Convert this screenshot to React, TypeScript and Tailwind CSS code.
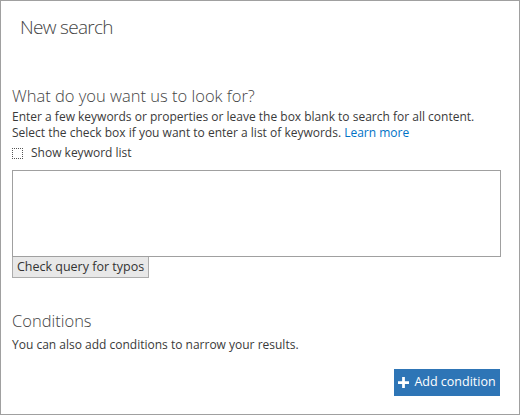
import React from "react";

export default function App() {
  return (
    <div
      className="w-[520px] h-[415px] border border-[#a0a0a0] bg-white text-[#3a3a3a] flex flex-col pl-[11px] pr-[19px]"
      style={{ fontFamily: '"Open Sans", "Noto Sans", sans-serif' }}
    >
      <h1 className="ml-[8px] mt-[13px] text-[19px] leading-[26px] font-light tracking-[-0.7px] text-[#444444]">
        New search
      </h1>

      <h2 className="mt-[45px] text-[16.5px] leading-[22px] font-light text-[#444444]">
        What do you want us to look for?
      </h2>
      <p className="mt-[2px] text-[12px] leading-[16px]">
        Enter a few keywords or properties or leave the box blank to search for all content.
        <br />
        Select the check box if you want to enter a list of keywords.{" "}
        <a className="text-[#0072c6]">Learn more</a>
      </p>

      <label className="mt-[3px] flex items-center gap-[8px] text-[12px] leading-[18px]">
        <span className="w-[11px] h-[11px] border border-dotted border-[#555555] block" />
        <span>Show keyword list</span>
      </label>

      <textarea className="mt-[8px] w-[489px] h-[87px] border border-[#a0a0a0] resize-none outline-none" />

      <div className="flex">
        <button className="h-[21px] w-[137px] border border-[#acacac] border-t-0 bg-[#e8e8e8] text-[12.5px] leading-[18px] text-[#333333]">
          Check query for typos
        </button>
      </div>

      <h2 className="mt-[32px] text-[16.5px] leading-[22px] font-light text-[#444444]">Conditions</h2>
      <p className="mt-[5px] text-[12px] leading-[16px]">You can also add conditions to narrow your results.</p>

      <div className="flex justify-end mt-[16px]">
        <button className="h-[27px] w-[106px] bg-[#2e75b6] text-white text-[12.5px] flex items-center justify-center gap-[5px]">
          <svg width="11" height="11" viewBox="0 0 12 12">
            <path d="M4.5 0h3v4.5H12v3H7.5V12h-3V7.5H0v-3h4.5z" fill="#ffffff" />
          </svg>
          <span>Add condition</span>
        </button>
      </div>
    </div>
  );
}
